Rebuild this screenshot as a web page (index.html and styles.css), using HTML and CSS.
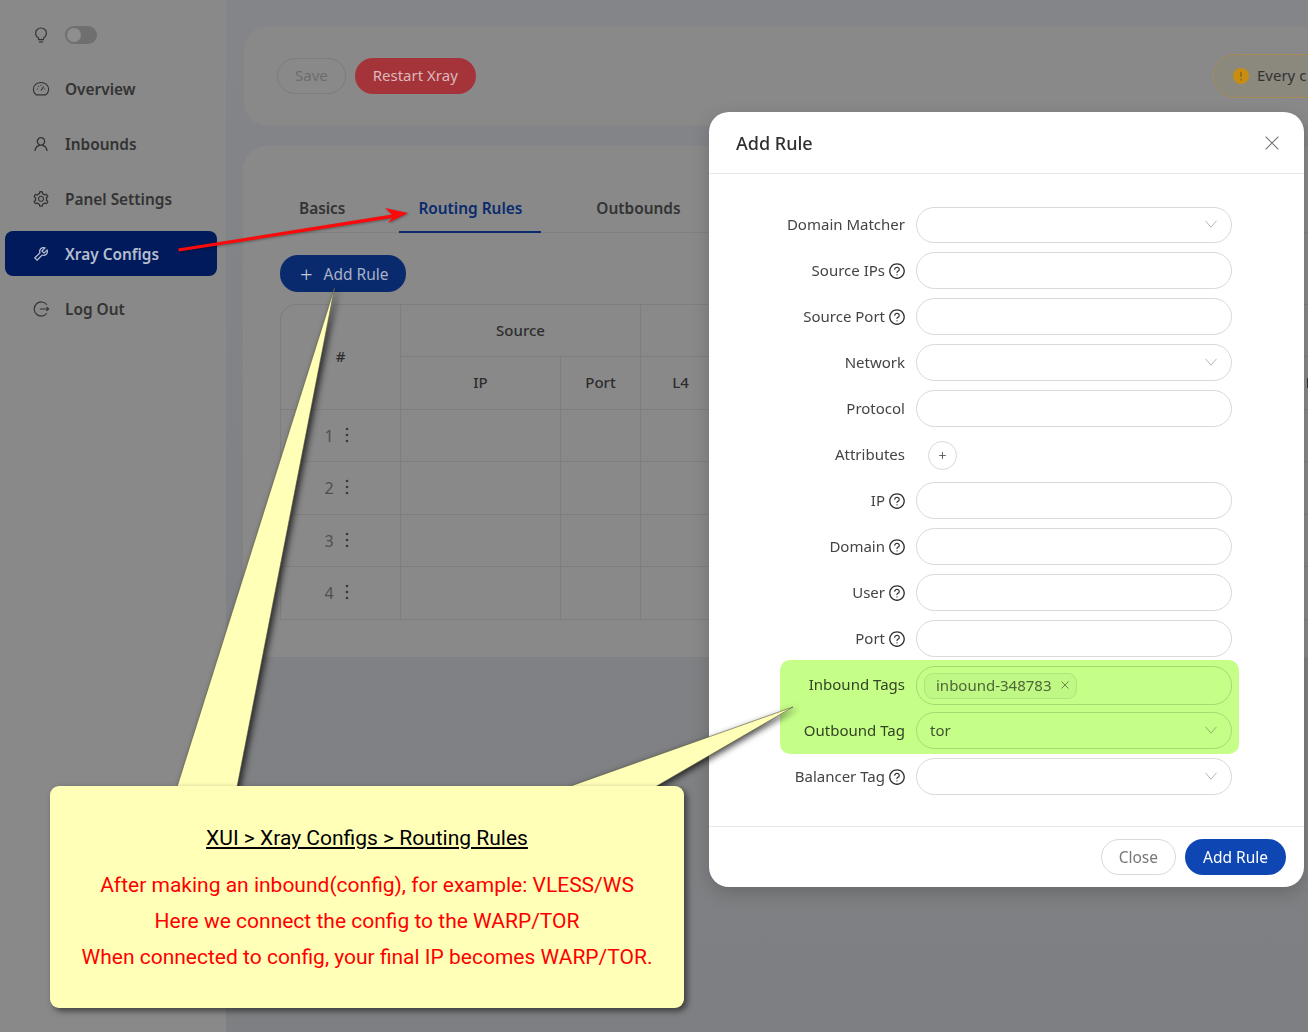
FILE: index.html
```html
<!DOCTYPE html>
<html lang="en">
<head>
<meta charset="utf-8">
<title>XUI Xray Configs</title>
<link rel="stylesheet" href="styles.css">
</head>
<body>
<svg class="defs" width="0" height="0">
<symbol id="help" viewBox="0 0 1024 1024"><path d="M512 64C264.6 64 64 264.6 64 512s200.6 448 448 448 448-200.6 448-448S759.4 64 512 64zm0 820c-205.4 0-372-166.6-372-372s166.6-372 372-372 372 166.6 372 372-166.6 372-372 372z"/><path d="M623.6 316.7C593.6 290.4 554 276 512 276s-81.6 14.5-111.6 40.7C369.2 344 352 380.7 352 420v7.6c0 4.4 3.6 8 8 8h48c4.4 0 8-3.6 8-8V420c0-44.1 43.1-80 96-80s96 35.9 96 80c0 31.1-22 59.6-56.1 72.7-21.2 8.1-39.2 22.3-52.1 40.9-13.1 19-19.9 41.8-19.9 64.9V620c0 4.4 3.6 8 8 8h48c4.4 0 8-3.6 8-8v-22.7a48.3 48.3 0 0 1 30.9-44.8c59-22.7 97.1-74.7 97.1-132.5.1-39.3-17.1-76-48.3-103.3zM472 732a40 40 0 1 0 80 0 40 40 0 1 0-80 0z"/></symbol>
<symbol id="down" viewBox="0 0 12 8"><path d="M.5.8 6 7.2 11.500.8" fill="none" stroke="currentColor"/></symbol>
<symbol id="more" viewBox="0 0 4 16"><circle cx="2" cy="2" r="1.300"/><circle cx="2" cy="8" r="1.300"/><circle cx="2" cy="14" r="1.300"/></symbol>
</svg>

<div class="layout">
<aside class="sidebar">
<div class="theme">
<svg class="icon" viewBox="0 0 16 16" fill="none" stroke="currentColor" stroke-width="1"><path d="M5.800 10.600C4.200 9.700 3.200 8.100 3.200 6.400 3.200 3.800 5.300 1.800 8 1.800s4.800 2 4.800 4.600c0 1.700-1 3.300-2.600 4.200v1.500H5.800z"/><path d="M6.200 14.200h3.600"/></svg>
<span class="switch"><span class="knob"></span></span>
</div>
<a class="item"><svg class="icon" viewBox="0 0 16 16" fill="none" stroke="currentColor" stroke-width="1"><path d="M3.700 13.200C2.200 12 1.200 10.200 1.200 8.300 1.200 4.800 4.200 2.200 8 2.200s6.800 2.600 6.800 6.100c0 1.900-1 3.700-2.500 4.900z"/><path d="M8 9.300 10.400 5.800M4.200 8h1M10.800 8h1M5.500 5.400l.6.600M8 4.200v1"/></svg>Overview</a>
<a class="item"><svg class="icon" viewBox="0 0 1024 1024" fill="currentColor"><path d="M858.5 763.6a374 374 0 0 0-80.600-119.500 375.630 375.630 0 0 0-119.500-80.600c-.4-.2-.8-.3-1.200-.5C719.500 518 760 444.700 760 362c0-137-111-248-248-248S264 225 264 362c0 82.700 40.500 156 102.800 201.100-.4.2-.8.3-1.200.5-44.800 18.900-85 46-119.500 80.600a375.630 375.630 0 0 0-80.600 119.500A371.700 371.700 0 0 0 136 901.800a8 8 0 0 0 8 8.200h60c4.400 0 7.900-3.500 8-7.800 2-77.200 33-149.500 87.800-204.300 56.700-56.700 132-87.900 212.200-87.900s155.500 31.200 212.200 87.900C779 752.700 810 825 812 902.200c.1 4.400 3.600 7.800 8 7.800h60a8 8 0 0 0 8-8.200c-1-47.800-10.900-94.300-29.500-138.200zM512 534c-45.900 0-89.100-17.900-121.600-50.400S340 407.900 340 362c0-45.900 17.900-89.100 50.400-121.600S466.100 190 512 190s89.100 17.900 121.600 50.400S684 316.100 684 362c0 45.900-17.900 89.100-50.400 121.600S557.900 534 512 534z"/></svg>Inbounds</a>
<a class="item"><svg class="icon" viewBox="0 0 1024 1024" fill="currentColor"><path d="M924.800 625.700l-65.500-56c3.100-19 4.700-38.400 4.700-57.800s-1.600-38.800-4.700-57.800l65.500-56a32.030 32.030 0 0 0 9.300-35.200l-.9-2.600a443.740 443.740 0 0 0-79.700-137.900l-1.800-2.100a32.120 32.120 0 0 0-35.100-9.500l-81.300 28.900c-30-24.600-63.500-44-99.700-57.600l-15.700-85a32.050 32.050 0 0 0-25.800-25.700l-2.700-.5c-52.100-9.400-106.900-9.400-159 0l-2.700.5a32.050 32.050 0 0 0-25.800 25.700l-15.800 85.400a351.860 351.860 0 0 0-99 57.400l-81.900-29.100a32 32 0 0 0-35.100 9.500l-1.800 2.100a446.020 446.020 0 0 0-79.700 137.900l-.9 2.600c-4.500 12.500-.8 26.500 9.300 35.200l66.300 56.600c-3.100 18.800-4.600 38-4.600 57.100 0 19.200 1.500 38.400 4.600 57.100L99 625.500a32.030 32.030 0 0 0-9.300 35.200l.9 2.600c18.100 50.400 44.900 96.900 79.700 137.900l1.800 2.100a32.120 32.120 0 0 0 35.100 9.500l81.900-29.100c29.800 24.500 63.100 43.900 99 57.400l15.800 85.400a32.050 32.050 0 0 0 25.800 25.700l2.700.5a449.400 449.400 0 0 0 159 0l2.700-.5a32.050 32.050 0 0 0 25.800-25.700l15.700-85a350 350 0 0 0 99.700-57.600l81.300 28.900a32 32 0 0 0 35.100-9.500l1.800-2.100c34.800-41.100 61.600-87.500 79.700-137.900l.9-2.600c4.500-12.300.8-26.300-9.300-35zM788.300 465.900c2.500 15.100 3.800 30.600 3.800 46.100s-1.300 31-3.800 46.100l-6.600 40.100 74.700 63.900a370.030 370.030 0 0 1-42.600 73.600L721 702.800l-31.400 25.800c-23.900 19.600-50.500 35-79.300 45.800l-38.100 14.300-17.900 97a377.500 377.500 0 0 1-85 0l-17.900-97.200-37.800-14.500c-28.500-10.800-55-26.200-78.700-45.700l-31.400-25.900-93.400 33.200c-17-22.900-31.200-47.600-42.600-73.600l75.500-64.500-6.500-40c-2.400-14.900-3.700-30.300-3.700-45.500 0-15.300 1.200-30.600 3.700-45.500l6.500-40-75.500-64.500c11.300-26.100 25.600-50.700 42.600-73.600l93.400 33.200 31.400-25.900c23.700-19.500 50.200-34.900 78.700-45.700l37.900-14.300 17.900-97.200c28.100-3.200 56.800-3.200 85 0l17.900 97 38.100 14.300c28.700 10.800 55.400 26.200 79.300 45.800l31.400 25.800 92.800-32.900c17 22.900 31.200 47.600 42.600 73.600L781.800 426l6.500 39.900zM512 326c-97.200 0-176 78.800-176 176s78.800 176 176 176 176-78.800 176-176-78.800-176-176-176zm79.200 255.200A111.600 111.600 0 0 1 512 614c-29.900 0-58-11.700-79.200-32.800A111.600 111.600 0 0 1 400 502c0-29.900 11.700-58 32.800-79.200C454 401.600 482.100 390 512 390c29.900 0 58 11.600 79.200 32.800A111.600 111.600 0 0 1 624 502c0 29.900-11.700 58-32.800 79.200z"/></svg>Panel Settings</a>
<a class="item active"><svg class="icon" viewBox="0 0 1024 1024" fill="currentColor"><path d="M876.600 239.500c-.5-.9-1.200-1.800-2-2.500-5-5-13.100-5-18.100 0L684.200 409.300l-67.900-67.900L788.700 169c.8-.8 1.400-1.600 2-2.500 3.600-6.100 1.600-13.900-4.500-17.500-98.200-58-226.800-44.700-311.300 39.700-67 67-89.200 162-66.500 247.400l-293 293c-3 3-2.800 7.900.3 11l169.700 169.700c3.100 3.100 8.100 3.300 11 .3l292.900-292.900c85.500 22.800 180.500.7 247.600-66.400 84.400-84.500 97.700-213.100 39.700-311.300zM786 499.800c-58.100 58.100-145.300 69.300-214.600 33.600l-8.800 8.800-.1-.1-274 274.100-79.200-79.200 230.100-230.100s0 .1.1.1l52.800-52.800c-35.700-69.300-24.500-156.500 33.600-214.600a184.200 184.200 0 0 1 144-53.500L537 318.900a32.050 32.050 0 0 0 0 45.300l124.500 124.500a32.050 32.050 0 0 0 45.300 0l132.800-132.800c3.700 51.800-14.400 104.800-53.600 143.900z"/></svg>Xray Configs</a>
<a class="item"><svg class="icon" viewBox="0 0 16 16" fill="none" stroke="currentColor" stroke-width="1"><path d="M13.300 4.200A6.300 6.300 0 1 0 13.300 11.800"/><path d="M7 8h7.800M12.800 6.300 14.800 8l-2 1.700"/></svg>Log Out</a>
</aside>

<main class="content">
<section class="card actions">
<div class="buttons">
<button class="btn ghost">Save</button>
<button class="btn danger">Restart Xray</button>
</div>
<div class="notice">
<svg class="notice-icon" viewBox="0 0 16 16"><circle cx="8" cy="8" r="8" fill="#c98d12"/><path d="M8 3.800v5.200M8 10.800v1.600" stroke="#8b6a26" stroke-width="1.600"/></svg>
Every c
</div>
</section>

<section class="card routing">
<div class="tabs">
<a class="tab">Basics</a>
<a class="tab current">Routing Rules</a>
<a class="tab">Outbounds</a>
</div>
<button class="btn primary add"><span class="plus">+</span>Add Rule</button>
<table class="rules">
<colgroup><col class="c120"><col class="c160"><col class="c80"><col class="c80"><col class="c193"><col class="c320"><col class="c160"></colgroup>
<thead>
<tr><th rowspan="2">#</th><th colspan="2">Source</th><th colspan="3"></th><th></th></tr>
<tr><th>IP</th><th>Port</th><th>L4</th><th></th><th></th><th class="cut"><span class="cut-mark"></span></th></tr>
</thead>
<tbody>
<tr><td class="num">1<svg class="dots"><use href="#more"/></svg></td><td></td><td></td><td></td><td></td><td></td><td></td></tr>
<tr><td class="num">2<svg class="dots"><use href="#more"/></svg></td><td></td><td></td><td></td><td></td><td></td><td></td></tr>
<tr><td class="num">3<svg class="dots"><use href="#more"/></svg></td><td></td><td></td><td></td><td></td><td></td><td></td></tr>
<tr><td class="num">4<svg class="dots"><use href="#more"/></svg></td><td></td><td></td><td></td><td></td><td></td><td></td></tr>
</tbody>
</table>
</section>
</main>
</div>

<div class="modal">
<div class="modal-head">
<span>Add Rule</span>
<svg class="close" viewBox="0 0 14 14"><path d="M.6.600 13.400 13.400M13.400.600.6 13.400" stroke="currentColor" stroke-width="1.200"/></svg>
</div>
<div class="form">
<div class="row"><label>Domain Matcher</label><div class="field"><svg class="chev"><use href="#down"/></svg></div></div>
<div class="row"><label>Source IPs<svg class="help"><use href="#help"/></svg></label><div class="field"></div></div>
<div class="row"><label>Source Port<svg class="help"><use href="#help"/></svg></label><div class="field"></div></div>
<div class="row"><label>Network</label><div class="field"><svg class="chev"><use href="#down"/></svg></div></div>
<div class="row"><label>Protocol</label><div class="field"></div></div>
<div class="row"><label>Attributes</label><button class="round">+</button></div>
<div class="row"><label>IP<svg class="help"><use href="#help"/></svg></label><div class="field"></div></div>
<div class="row"><label>Domain<svg class="help"><use href="#help"/></svg></label><div class="field"></div></div>
<div class="row"><label>User<svg class="help"><use href="#help"/></svg></label><div class="field"></div></div>
<div class="row"><label>Port<svg class="help"><use href="#help"/></svg></label><div class="field"></div></div>
<div class="row"><label>Inbound Tags</label><div class="field multi"><span class="tag">inbound-348783<svg class="tag-x" viewBox="0 0 8 8"><path d="M.5.500 7.500 7.500M7.500.500.5 7.500" stroke="currentColor"/></svg></span></div></div>
<div class="row"><label>Outbound Tag</label><div class="field"><span class="value">tor</span><svg class="chev"><use href="#down"/></svg></div></div>
<div class="row"><label>Balancer Tag<svg class="help"><use href="#help"/></svg></label><div class="field"><svg class="chev"><use href="#down"/></svg></div></div>
</div>
<div class="modal-foot">
<button class="btn plain">Close</button>
<button class="btn submit">Add Rule</button>
</div>
<div class="marker"></div>
</div>

<svg class="notes" viewBox="0 0 1308 1032">
<g class="pointers">
<polygon points="177,787 237,787 334.500,288"/>
<polygon points="568,787 655,787 793,707"/>
</g>
<g class="arrow">
<polygon points="178,248.500 392,214.500 385,208 408,213 388,223 392,218 179,251.500"/>
</g>
</svg>

<div class="callout">
<p class="callout-title">XUI &gt; Xray Configs &gt; Routing Rules</p>
<p>After making an inbound(config), for example: VLESS/WS</p>
<p>Here we connect the config to the WARP/TOR</p>
<p>When connected to config, your final IP becomes WARP/TOR.</p>
</div>
</body>
</html>
```

FILE: styles.css
```css
html,body{margin:0;height:1032px;overflow:hidden;}
body{background:linear-gradient(#848588,#7e7f82);color:#333;font-family:"Noto Sans","Open Sans",sans-serif;font-size:15px;position:relative;}
.defs{position:absolute;}
.layout{display:flex;height:1032px;}

/* sidebar */
.sidebar{width:226px;box-sizing:border-box;background:#898989;padding:12px 9px 0 5px;display:flex;flex-direction:column;gap:10px;flex:none;}
.theme{display:flex;align-items:center;gap:15px;height:44px;box-sizing:border-box;padding:2px 0 0 27px;color:#333;}
.icon{width:18px;height:18px;flex:none;}
.switch{width:32px;height:18px;border-radius:9px;background:#6f6f6f;display:flex;align-items:center;padding-left:2px;box-sizing:border-box;}
.knob{width:14px;height:14px;border-radius:50%;background:#8e8e8e;}
.item{display:flex;align-items:center;gap:15px;height:45px;box-sizing:border-box;padding:1px 0 0 27px;border-radius:8px;font-weight:600;font-size:15.4px;color:#333;}
.item.active{background:#001a5c;color:#b5bdcf;}

/* page cards */
.content{padding:26px 0 0 17px;display:flex;flex-direction:column;gap:20px;}
.card{width:1300px;box-sizing:border-box;background:#898989;border-radius:24px;overflow:hidden;}
.actions{height:100px;padding:0 0 0 33px;display:flex;align-items:center;justify-content:space-between;border:1px solid #868686;}
.buttons{display:flex;gap:9px;}
.btn{font:inherit;height:36px;border-radius:18px;padding:0 17px 2px;border:1px solid transparent;cursor:pointer;box-sizing:border-box;}
.ghost{background:#898989;border-color:#7d7d7d;color:#6c6c6c;}
.danger{background:#a5333a;color:#dcb9ba;}
.notice{width:329px;flex:none;height:44px;box-sizing:border-box;border:1px solid #a58c55;border-radius:22px;padding:0 0 2px 19px;display:flex;align-items:center;gap:8px;white-space:nowrap;color:#333;background:#8b887e;}
.notice-icon{width:16px;height:16px;flex:none;margin-top:2px;}
.routing{height:511px;padding:39px 0 0 37px;}
.tabs{display:flex;gap:37px;height:48px;border-bottom:1px solid #808080;box-sizing:border-box;padding-left:1px;}
.tab{padding:13px 18px 0;font-weight:600;font-size:15.4px;color:#333;height:48px;box-sizing:border-box;}
.tab.current{color:#0a2a6e;border-bottom:2px solid #0a2a6e;padding:13px 19px 0;margin-left:-1px;}
.primary{background:#0a2a6e;color:#a9b2c6;font-size:15.500px;}
.add{display:flex;align-items:center;gap:11px;margin-top:22px;height:37px;padding:0 16px 0 19px;}
.plus{font-size:22px;line-height:20px;color:#c3c9d6;font-weight:300;}
.rules{margin-top:12px;border-collapse:separate;border-spacing:0;table-layout:fixed;width:1113px;border-top:1px solid #7e7e7e;border-left:1px solid #7e7e7e;border-top-left-radius:16px;}
.c120{width:120px;}.c160{width:160px;}.c80{width:80px;}.c193{width:193px;}.c320{width:320px;}
.rules th,.rules td{border-right:1px solid #7e7e7e;border-bottom:1px solid #7e7e7e;padding:0 0 2px;text-align:center;box-sizing:border-box;}
.rules th{font-weight:500;color:#2d2d2d;}
.rules thead tr:first-child th{height:52px;}
.rules thead tr:last-child th{height:53px;}
.rules td{color:#505050;font-size:16px;padding-bottom:0;}
.rules tbody tr:nth-child(odd) td{height:52px;}
.rules tbody tr:nth-child(even) td{height:53px;}
.rules .cut{text-align:left;padding-left:73px;}
.cut-mark{display:inline-block;width:2px;height:10px;background:#333;}
.rules .num{white-space:nowrap;padding-right:8px;}
.dots{width:4px;height:16px;margin-left:11px;fill:#3a3a3a;vertical-align:-1px;}

/* dialog */
.modal{position:absolute;left:709px;top:112px;width:595px;height:775px;background:#fff;border-radius:20px;box-shadow:0 6px 18px rgba(0,0,0,.18);z-index:1;}
.modal-head{height:62px;box-sizing:border-box;padding:0 25px 0 27px;border-bottom:1px solid #e8e8e8;display:flex;align-items:center;justify-content:space-between;font-size:18px;font-weight:500;color:#2f2f2f;}
.close{width:14px;height:14px;color:#777;}
.form{padding:32px 0 31px;display:flex;flex-direction:column;gap:9px;}
.row{display:flex;height:37px;gap:11px;}
.row label{width:196px;flex:none;display:flex;align-items:center;justify-content:flex-end;gap:3px;color:#444;white-space:nowrap;padding-bottom:2px;box-sizing:border-box;}
.help{width:18px;height:18px;fill:#2d2d2d;flex:none;margin:2px -1px 0 0;}
.field{width:316px;height:37px;box-sizing:border-box;border:1px solid #d9d9d9;border-radius:19px;display:flex;align-items:center;justify-content:space-between;padding:0 14px 2px 13px;color:#555;}
.row:first-child .field{height:36px;margin-top:1px;}
.multi{height:39px;padding-left:7px;padding-bottom:0;}
.chev{width:12px;height:8px;color:#b5b5b5;margin-left:auto;}
.tag{display:flex;align-items:center;gap:9px;height:26px;box-sizing:border-box;padding:0 7px 2px 11px;border:1px solid #e4e4e4;border-radius:9px;background:#f8f8f8;color:#666;}
.tag-x{width:8px;height:8px;color:#888;}
.round{width:29px;height:29px;margin:5px 0 0 12px;border-radius:50%;border:1px solid #d9d9d9;background:#fff;color:#666;font:14px "Noto Sans",sans-serif;padding:0;}
.modal-foot{border-top:1px solid #e8e8e8;height:60px;box-sizing:border-box;padding:0 18px;display:flex;align-items:center;justify-content:flex-end;gap:9px;}
.plain{background:#fff;border-color:#d9d9d9;color:#777;font-size:15.500px;padding-bottom:0;}
.submit{background:#0e47b4;color:#fff;font-size:15.500px;padding-bottom:0;}
.marker{position:absolute;left:71px;top:548px;width:459px;height:94px;background:#c5ff88;border-radius:10px;mix-blend-mode:multiply;}

/* annotation layer */
.notes{position:absolute;left:0;top:0;width:1308px;height:1032px;z-index:2;pointer-events:none;}
.pointers{fill:#ffffb8;stroke:#55553f;stroke-width:.6;filter:drop-shadow(3px 2px 3px rgba(0,0,0,.7));}
.arrow{fill:#fa0a0a;filter:drop-shadow(1px 1px 1px rgba(0,0,0,.3));}
.callout{position:absolute;left:50px;top:786px;width:634px;height:222px;box-sizing:border-box;padding:34px 0 0;background:#ffffb8;border-radius:9px;box-shadow:3px 3px 6px rgba(0,0,0,.55);z-index:3;text-align:center;color:#f00;font-family:"Roboto","Liberation Sans",sans-serif;font-size:21px;line-height:36px;}
.callout p{margin:0;}
.callout .callout-title{color:#000;text-decoration:underline;margin-bottom:11px;}
```
